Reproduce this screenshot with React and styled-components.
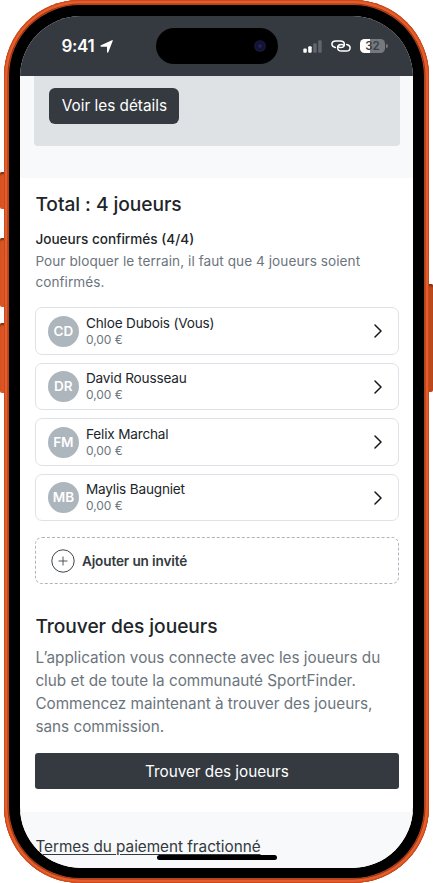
import styled, { createGlobalStyle } from "styled-components";

const players = [
  { initials: "CD", name: "Chloe Dubois (Vous)", price: "0,00 €" },
  { initials: "DR", name: "David Rousseau", price: "0,00 €" },
  { initials: "FM", name: "Felix Marchal", price: "0,00 €" },
  { initials: "MB", name: "Maylis Baugniet", price: "0,00 €" },
];

const App = () => {
  return (
    <>
      <GlobalStyle />
      <Stage>
        <SideButton $top={172} $height={37} />
        <SideButton $top={238} $height={69} />
        <SideButton $top={323} $height={70} />
        <SideButton $top={284} $height={108} $right />
        <Phone>
          <Bezel>
            <Screen>
              <StatusBar>
                <Clock>
                  9:41
                  <LocationIcon />
                </Clock>
                <Island>
                  <Lens />
                </Island>
                <StatusIcons>
                  <SignalIcon />
                  <LinkIcon />
                  <Battery>
                    <Level>32</Level>
                    <Cap />
                  </Battery>
                </StatusIcons>
              </StatusBar>
              <Booking>
                <BookingCard>
                  <DetailsButton>Voir les détails</DetailsButton>
                </BookingCard>
              </Booking>
              <Main>
                <Title>Total : 4 joueurs</Title>
                <Subtitle>Joueurs confirmés (4/4)</Subtitle>
                <Hint>
                  Pour bloquer le terrain, il faut que 4 joueurs soient confirmés.
                </Hint>
                <List>
                  {players.map((player) => (
                    <Player key={player.initials}>
                      <Avatar>{player.initials}</Avatar>
                      <Info>
                        <Name>{player.name}</Name>
                        <Price>{player.price}</Price>
                      </Info>
                      <Chevron />
                    </Player>
                  ))}
                </List>
                <AddGuest>
                  <PlusIcon />
                  Ajouter un invité
                </AddGuest>
                <Title>Trouver des joueurs</Title>
                <Text>
                  L’application vous connecte avec les joueurs du club et de
                  toute la communauté SportFinder. Commencez maintenant à
                  trouver des joueurs, sans commission.
                </Text>
                <FindButton>Trouver des joueurs</FindButton>
              </Main>
              <Footer>
                <Terms href="#">Termes du paiement fractionné</Terms>
              </Footer>
              <HomeIndicator />
            </Screen>
          </Bezel>
        </Phone>
      </Stage>
    </>
  );
};

const LocationIcon = () => (
  <svg width="13" height="13" viewBox="0 0 13 13">
    <path
      d="M12.7.9 8.3 12.2c-.3.8-1.3.6-1.3-.3V6.7H1.3C.3 6.7.1 5.6 1 5.2L11.9.2c.6-.3 1 .1.8.7Z"
      fill="#fff"
    />
  </svg>
);

const SignalIcon = () => (
  <svg width="19" height="13" viewBox="0 0 19 13">
    <rect x="0.3" y="8.4" width="3.5" height="4.4" rx="1.1" fill="#fff" />
    <rect x="5.2" y="6.2" width="3.5" height="6.6" rx="1.1" fill="#fff" />
    <rect x="10.2" y="3.3" width="3.5" height="9.5" rx="1.1" fill="#61666b" />
    <rect x="15.2" y="0.3" width="3.5" height="12.5" rx="1.1" fill="#61666b" />
  </svg>
);

const LinkIcon = () => (
  <svg width="20" height="12" viewBox="0 0 20 12" fill="none">
    <path
      d="M4.3 7.5C2.2 7 .9 5.9.9 4.3.9 2.3 2.5 1 4.7 1h4.6c2.5 0 4.1 1.4 4.1 3.3 0 2-1.6 3.3-3.7 3.3-1.2 0-2.2-.4-2.7-1.1"
      stroke="#fff"
      strokeWidth="1.5"
      strokeLinecap="round"
    />
    <path
      d="M15.7 4.5c2.1.5 3.4 1.600 3.4 3.2 0 2-1.6 3.3-3.8 3.3h-4.6c-2.5 0-4.1-1.4-4.1-3.3 0-2 1.6-3.3 3.7-3.3 1.2 0 2.2.4 2.7 1.1"
      stroke="#fff"
      strokeWidth="1.5"
      strokeLinecap="round"
    />
  </svg>
);

const Chevron = () => (
  <svg width="8" height="14" viewBox="0 0 8 14" fill="none">
    <path
      d="m1 1 6 6-6 6"
      stroke="#15191d"
      strokeWidth="1.5"
      strokeLinecap="round"
      strokeLinejoin="round"
    />
  </svg>
);

const PlusIcon = () => (
  <svg width="24" height="24" viewBox="0 0 24 24" fill="none" stroke="#3f454a">
    <circle cx="12" cy="12" r="11.2" strokeWidth="1" />
    <path d="M12 7.5v9M7.5 12h9" strokeWidth="0.9" />
  </svg>
);

const GlobalStyle = createGlobalStyle`
  * {
    box-sizing: border-box;
  }
  body {
    margin: 0;
    background: #fff;
    font-family: Inter, "Liberation Sans", sans-serif;
    color: #212529;
    overflow: hidden;
  }
  h2, h3, p {
    margin: 0;
  }
  svg {
    display: block;
    flex-shrink: 0;
  }
`;

const Stage = styled.div`
  position: relative;
  width: 433px;
  height: 883px;
  padding: 0 4px;
`;

const SideButton = styled.div`
  position: absolute;
  top: ${({ $top }) => $top}px;
  ${({ $right }) => ($right ? "right: 0;" : "left: 0;")}
  width: 6px;
  height: ${({ $height }) => $height}px;
  border-radius: ${({ $right }) => ($right ? "0 2px 2px 0" : "2px 0 0 2px")};
  background: ${({ $right }) => ($right ? "#bd481c" : "#dc5423")};
  box-shadow: inset 0 3px 2px -1px #7d2e10;
`;

const Phone = styled.div`
  position: relative;
  height: 883px;
  padding: 5px;
  border-radius: 76px;
  background: #dc5223;
  box-shadow: inset 0 0 0 1px #c74b1d, inset 0 0 0 3.5px #e75c2a,
    inset 0 0 1px 4.5px #8a3413;
`;

const Bezel = styled.div`
  height: 873px;
  padding: 11px 11px 10px;
  border-radius: 71px;
  background: #000;
`;

const Screen = styled.div`
  position: relative;
  display: flex;
  flex-direction: column;
  height: 852px;
  border-radius: 61px;
  background: #fff;
  overflow: hidden;
`;

const StatusBar = styled.header`
  display: grid;
  grid-template-columns: 1fr 122px 1fr;
  align-items: center;
  height: 60px;
  flex-shrink: 0;
  background: #343a40;
`;

const Clock = styled.div`
  display: flex;
  align-items: center;
  gap: 5.5px;
  padding-left: 41.5px;
  font-size: 17px;
  font-weight: 600;
  letter-spacing: -0.4px;
  color: #fff;
`;

const Island = styled.div`
  display: flex;
  align-items: center;
  justify-content: flex-end;
  height: 36px;
  padding-right: 12px;
  border-radius: 18px;
  background: #000;
`;

const Lens = styled.div`
  width: 12px;
  height: 12px;
  border-radius: 50%;
  background: radial-gradient(#24245c 10%, #10102e 35%, #17173c 60%, #05050f);
`;

const StatusIcons = styled.div`
  display: flex;
  align-items: center;
  gap: 9px;
  padding-left: 25.5px;
`;

const Battery = styled.div`
  display: flex;
  align-items: center;
  gap: 1px;
`;

const Level = styled.div`
  width: 25px;
  height: 14px;
  border-radius: 4.5px;
  background: linear-gradient(90deg, #fff 42%, #75797d 42%);
  color: #3b4146;
  font-size: 11.5px;
  font-weight: 600;
  line-height: 14px;
  text-align: center;
`;

const Cap = styled.div`
  width: 1.5px;
  height: 4px;
  border-radius: 0 2px 2px 0;
  background: #75797d;
`;

const Booking = styled.section`
  height: 101.5px;
  flex-shrink: 0;
  padding: 0 13.5px 0 14.4px;
  background: #f8f9fa;
`;

const BookingCard = styled.div`
  height: 70.4px;
  padding: 11.5px 15px;
  border-radius: 0 0 4px 4px;
  background: #dee2e5;
`;

const DetailsButton = styled.button`
  width: 130px;
  height: 36.5px;
  padding: 0;
  border: none;
  border-radius: 6px;
  background: #343a40;
  color: #fff;
  font-family: inherit;
  font-size: 15.3px;
`;

const Main = styled.main`
  height: 634.5px;
  flex-shrink: 0;
  padding: 14.5px 14.5px 0 15.4px;
`;

const Title = styled.h2`
  font-size: 19.2px;
  font-weight: 500;
  line-height: 24px;
  letter-spacing: -0.06px;
`;

const Subtitle = styled.h3`
  margin-top: 13px;
  font-size: 13.6px;
  font-weight: 500;
  line-height: 21px;
`;

const Hint = styled.p`
  margin-top: 1px;
  font-size: 13.6px;
  line-height: 21px;
  letter-spacing: 0.06px;
  color: #6c757d;
`;

const List = styled.div`
  display: flex;
  flex-direction: column;
  gap: 8px;
  margin-top: 14.3px;
`;

const Player = styled.div`
  display: flex;
  align-items: center;
  height: 47.5px;
  padding: 0 15.5px 0 11.5px;
  border: 1px solid #dee2e6;
  border-radius: 7px;

  svg {
    margin-left: auto;
  }
`;

const Avatar = styled.div`
  width: 31px;
  height: 31px;
  border-radius: 50%;
  background: #adb5bd;
  color: #fff;
  font-size: 13.5px;
  font-weight: 600;
  line-height: 31px;
  text-align: center;
`;

const Info = styled.div`
  margin-left: 7.1px;
`;

const Name = styled.div`
  font-size: 13.6px;
  line-height: 17px;
  letter-spacing: -0.18px;
`;

const Price = styled.div`
  font-size: 12px;
  line-height: 16px;
  letter-spacing: -0.05px;
  color: #6c757d;
`;

const AddGuest = styled.div`
  display: flex;
  align-items: center;
  gap: 7px;
  height: 47.5px;
  margin: 15.5px 0 29.7px;
  padding-left: 14.5px;
  border: 1px dashed #adb5bd;
  border-radius: 7px;
  color: #343a40;
  font-size: 13.6px;
  font-weight: 600;
  letter-spacing: -0.13px;
`;

const Text = styled.p`
  margin-top: 8px;
  font-size: 15.3px;
  line-height: 23px;
  letter-spacing: -0.01px;
  color: #6c757d;
`;

const FindButton = styled.button`
  width: 100%;
  height: 36px;
  margin-top: 15px;
  padding: 1px 0 0;
  border: none;
  border-radius: 3px;
  background: #343a40;
  color: #fff;
  font-family: inherit;
  font-size: 15.3px;
  letter-spacing: -0.03px;
`;

const Footer = styled.footer`
  flex-grow: 1;
  padding: 23px 15.4px 0;
  background: #f8f9fa;
`;

const Terms = styled.a`
  display: block;
  font-size: 15.3px;
  line-height: 24px;
  letter-spacing: -0.03px;
  color: #343a40;
  text-underline-offset: 2px;
`;

const HomeIndicator = styled.div`
  position: absolute;
  left: 137px;
  bottom: 8px;
  width: 120px;
  height: 5px;
  border-radius: 3px;
  background: #000;
`;

export default App;
